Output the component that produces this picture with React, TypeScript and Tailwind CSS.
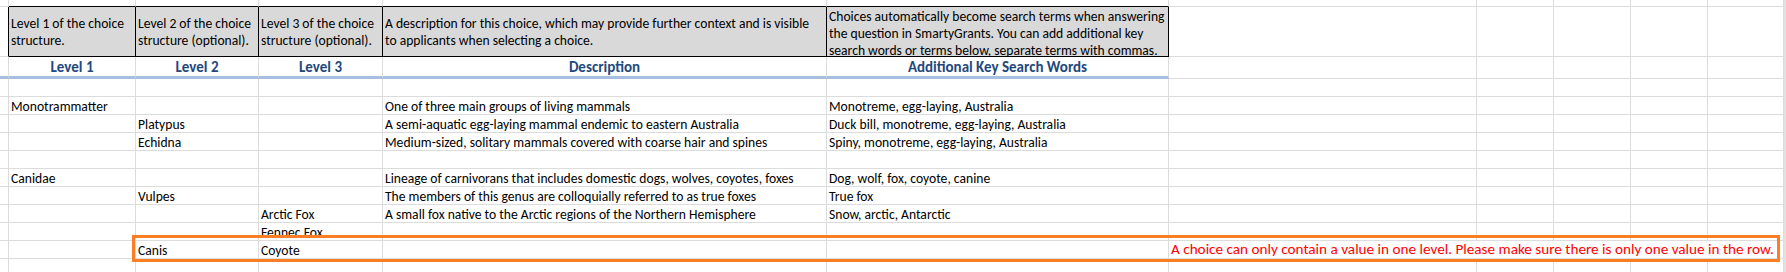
import React from "react";

// column widths A..K, last one stops short of the scrollbar strip
const GRID =
  "grid grid-cols-[9px_127px_123px_124px_444px_342px_308px_77px_77px_77px_76px]";
const LINE = "border-[#dcdcdc]";

type DataRow = [string, string, string, string, string];

const rows: DataRow[] = [
  ["", "", "", "", ""],
  ["Monotrammatter", "", "", "One of three main groups of living mammals", "Monotreme, egg-laying, Australia"],
  ["", "Platypus", "", "A semi-aquatic egg-laying mammal endemic to eastern Australia", "Duck bill, monotreme, egg-laying, Australia"],
  ["", "Echidna", "", "Medium-sized, solitary mammals covered with coarse hair and spines", "Spiny, monotreme, egg-laying, Australia"],
  ["", "", "", "", ""],
  ["Canidae", "", "", "Lineage of carnivorans that includes domestic dogs, wolves, coyotes, foxes", "Dog, wolf, fox, coyote, canine"],
  ["", "Vulpes", "", "The members of this genus are colloquially referred to as true foxes", "True fox"],
  ["", "", "Arctic Fox", "A small fox native to the Arctic regions of the Northern Hemisphere", "Snow, arctic, Antarctic"],
  ["", "", "Fennec Fox", "", ""],
];

const Cell = ({ children, className = "" }: { children?: React.ReactNode; className?: string }) => (
  <div className={`h-[18px] border-b border-r ${LINE} pl-[2px] pt-[2px] text-[13.6px] leading-[16px] whitespace-nowrap ${className}`}>
    {children}
  </div>
);

const Blank = ({ n, h }: { n: number; h: string }) => (
  <>
    {Array.from({ length: n }).map((_, i) => (
      <div key={i} className={`${h} border-b border-r ${LINE}`} />
    ))}
  </>
);

const headers: React.ReactNode[] = [
  <>Level 1 of the choice<br />structure.</>,
  <>Level 2 of the choice<br />structure (optional).</>,
  <>Level 3 of the choice<br />structure (optional).</>,
  <>A description for this choice, which may provide further context and is visible<br />to applicants when selecting a choice.</>,
];

const levels = ["Level 1", "Level 2", "Level 3", "Description", "Additional Key Search Words"];

export default function App() {
  return (
    <div className="relative flex h-[272px] w-[1786px] overflow-hidden bg-white font-[Carlito,'Liberation_Sans',sans-serif] text-black">
      <div className={GRID}>
        {/* partial top row */}
        <div className={`h-[7px] border-b border-r ${LINE}`} />
        {[0, 1, 2, 3, 4].map((i) => (
          <div key={i} className="h-[7px] border-b border-r border-b-black border-r-[#dcdcdc]" />
        ))}
        <Blank n={5} h="h-[7px]" />

        {/* instruction row */}
        <div className={`h-[50px] border-b border-r border-b-[#dcdcdc] border-r-black`} />
        {headers.map((h, i) => (
          <div
            key={i}
            className="flex h-[50px] items-center border-b border-r border-black bg-[#d9d9d9] pl-[2px] text-[13.6px] leading-[17px] whitespace-nowrap"
          >
            <div>{h}</div>
          </div>
        ))}
        <div className="h-[50px] border-b border-r border-black bg-[#d9d9d9] pl-[2px] pt-[1px] text-[13.6px] leading-[17px] whitespace-nowrap">
          Choices automatically become search terms when answering
          <br />
          the question in SmartyGrants. You can add additional key
          <br />
          search words or terms below, separate terms with commas.
        </div>
        <Blank n={5} h="h-[50px]" />

        {/* column titles */}
        <div className={`h-[22px] border-r border-b-[3px] ${LINE} border-b-[#a7bfde]`} />
        {levels.map((l) => (
          <div
            key={l}
            className={`h-[22px] border-r border-b-[3px] ${LINE} border-b-[#a7bfde] pt-[1px] text-center text-[15px] font-bold leading-[18px] text-[#1f497d]`}
          >
            {l}
          </div>
        ))}
        <Blank n={5} h="h-[22px]" />

        {rows.map((r, i) => (
          <React.Fragment key={i}>
            <Cell />
            {r.map((v, j) => (
              <Cell key={j}>{v}</Cell>
            ))}
            <Blank n={5} h="h-[18px]" />
          </React.Fragment>
        ))}

        {/* row with two levels filled */}
        <Cell />
        <Cell />
        <Cell>Canis</Cell>
        <Cell>Coyote</Cell>
        <Cell />
        <Cell />
        <div className={`col-span-5 h-[18px] border-b border-r ${LINE} pl-[2px] text-[15.2px] leading-[16px] whitespace-nowrap text-[#ff0000]`}>
          A choice can only contain a value in one level. Please make sure there is only one value in the row.
        </div>

        {/* trailing row */}
        <Cell />
        <Cell />
        <Cell />
        <Cell />
        <Cell />
        <Cell />
        <Blank n={5} h="h-[18px]" />
      </div>
      <div className="w-[2px] bg-[#e2e2e2]" />

      {/* validation highlight */}
      <div className="absolute left-[132px] top-[235px] h-[27px] w-[1648px] border-[3px] border-[#fb7d26]" />
    </div>
  );
}
